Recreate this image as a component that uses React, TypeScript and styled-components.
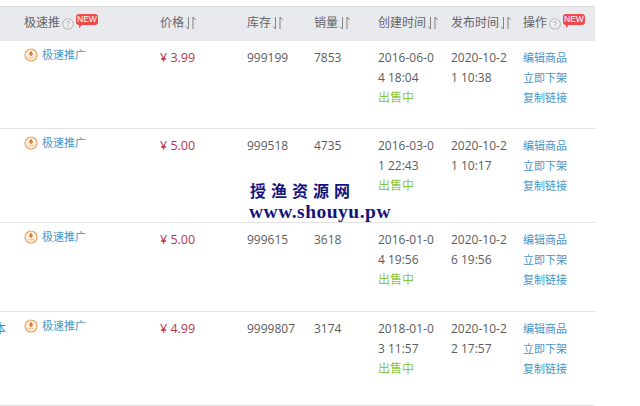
import styled, { createGlobalStyle } from 'styled-components';

const GlobalStyle = createGlobalStyle`
  html, body {
    margin: 0;
    padding: 0;
    background: #fff;
    font-family: "Open Sans", "Noto Sans CJK SC", sans-serif;
    font-size: 12px;
    color: #5c5c5c;
  }
`;

const COLUMNS = '24px 136px 87px 67px 64px 73px 72px 72px';

const Page = styled.div`
  position: relative;
  width: 640px;
  height: 406px;
  padding-top: 6px;
  box-sizing: border-box;
  overflow: hidden;
`;

const Table = styled.div`
  width: 595px;
`;

const HeaderRow = styled.div`
  display: grid;
  grid-template-columns: ${COLUMNS};
  align-items: center;
  height: 35px;
  box-sizing: border-box;
  padding-bottom: 3px;
  border-top: 1px solid #dcdcdf;
  background: #e9eaee;
  color: #666;
`;

const HeaderCell = styled.div`
  display: flex;
  align-items: center;
  white-space: nowrap;
  line-height: 30px;
`;

const Row = styled.div<{ $height: number }>`
  display: grid;
  grid-template-columns: ${COLUMNS};
  height: ${(props) => props.$height}px;
  box-sizing: border-box;
  padding-top: 7px;
  border-bottom: 1px solid #e2e2e2;
  line-height: 20px;
`;

const Cell = styled.div`
  word-break: break-all;
  padding-right: 12px;
  min-width: 0;
`;

const DateCell = styled(Cell)`
  padding-right: 14px;
`;

const Cut = styled.div`
  color: #3f8fc4;
  margin-left: -6px;
  white-space: nowrap;
`;

const Promo = styled.div`
  display: flex;
  align-items: center;
  gap: 4px;
  height: 16px;
  margin-top: -1px;
  color: #4a94c6;
  font-size: 11px;
`;

const Price = styled(Cell)`
  color: #b5364e;
  font-size: 12.5px;
`;

const Selling = styled.div`
  color: #8cc63f;
`;

const OpLink = styled.div`
  color: #4a94c6;
  font-size: 11px;
  white-space: nowrap;
`;

const NewBadge = styled.span`
  position: relative;
  display: inline-block;
  margin-left: 2px;
  margin-top: -6px;
  padding: 0 1px;
  height: 11px;
  line-height: 11px;
  border-radius: 3px;
  background: #ec4a50;
  color: #fff;
  font-family: "Liberation Sans", sans-serif;
  font-size: 8.5px;

  &::after {
    content: '';
    position: absolute;
    left: 3px;
    bottom: -3px;
    border-top: 3px solid #ec4a50;
    border-right: 3px solid transparent;
  }
`;

const Watermark = styled.div`
  position: absolute;
  left: 249px;
  top: 180px;
  color: #14147c;
  font-weight: 700;
`;

const WatermarkTitle = styled.div`
  font-family: "Noto Sans CJK SC", sans-serif;
  font-size: 16px;
  line-height: 20px;
  letter-spacing: 5px;
  padding-left: 1px;
`;

const WatermarkUrl = styled.div`
  font-family: "Liberation Serif", serif;
  font-size: 19.5px;
  line-height: 23px;
  letter-spacing: 0.5px;
  white-space: nowrap;
`;

function SortIcon() {
  return (
    <svg width="12" height="14" viewBox="0 0 12 14" fill="none" stroke="#777" strokeWidth="0.9" style={{ marginLeft: 1 }}>
      <path d="M3.5 1v12L1 10.5" />
      <path d="M8 13V1l2.8 2.8" />
    </svg>
  );
}

function HelpIcon() {
  return (
    <svg width="12" height="12" viewBox="0 0 13 13" style={{ marginLeft: 2, marginTop: 2 }}>
      <circle cx="6.5" cy="6.5" r="5.7" fill="#f1f1f3" stroke="#b9b9bd" strokeWidth="1.1" />
      <path d="M4.9 5.2c0-2.1 3.2-2.1 3.2 0 0 1.2-1.6 1.2-1.6 2.6" fill="none" stroke="#aaa" strokeWidth="1" />
      <circle cx="6.5" cy="9.6" r="0.7" fill="#aaa" />
    </svg>
  );
}

function PromoIcon() {
  return (
    <svg width="14" height="14" viewBox="0 0 14 14">
      <circle cx="7" cy="7" r="6" fill="#fdf1e2" stroke="#eda35f" strokeWidth="1.2" />
      <path d="M7 2.5 9 6 7 8.2 5 6Z" fill="#e2763a" />
      <path d="M3.6 8.2C5 10 9 10 10.4 8.2 10 11 4 11 3.6 8.2Z" fill="#f0b06f" />
    </svg>
  );
}

interface Item {
  height: number;
  lead?: string;
  price: string;
  stock: string;
  sales: string;
  created: string;
  published: string;
}

const items: Item[] = [
  { height: 88, price: '¥ 3.99', stock: '999199', sales: '7853', created: '2016-06-04 18:04', published: '2020-10-21 10:38' },
  { height: 94, price: '¥ 5.00', stock: '999518', sales: '4735', created: '2016-03-01 22:43', published: '2020-10-21 10:17' },
  { height: 89, price: '¥ 5.00', stock: '999615', sales: '3618', created: '2016-01-04 19:56', published: '2020-10-26 19:56' },
  { height: 94, lead: '本', price: '¥ 4.99', stock: '9999807', sales: '3174', created: '2018-01-03 11:57', published: '2020-10-22 17:57' },
];

export default function App() {
  return (
    <Page>
      <GlobalStyle />
      <Table>
        <HeaderRow>
          <div />
          <HeaderCell>
            极速推
            <HelpIcon />
            <NewBadge>NEW</NewBadge>
          </HeaderCell>
          <HeaderCell>价格<SortIcon /></HeaderCell>
          <HeaderCell>库存<SortIcon /></HeaderCell>
          <HeaderCell>销量<SortIcon /></HeaderCell>
          <HeaderCell>创建时间<SortIcon /></HeaderCell>
          <HeaderCell>发布时间<SortIcon /></HeaderCell>
          <HeaderCell>
            操作
            <HelpIcon />
            <NewBadge>NEW</NewBadge>
          </HeaderCell>
        </HeaderRow>
        {items.map((item) => (
          <Row $height={item.height} key={item.stock}>
            <Cut>{item.lead}</Cut>
            <Promo>
              <PromoIcon />
              极速推广
            </Promo>
            <Price>{item.price}</Price>
            <Cell>{item.stock}</Cell>
            <Cell>{item.sales}</Cell>
            <DateCell>
              {item.created}
              <Selling>出售中</Selling>
            </DateCell>
            <DateCell>{item.published}</DateCell>
            <div>
              <OpLink>编辑商品</OpLink>
              <OpLink>立即下架</OpLink>
              <OpLink>复制链接</OpLink>
            </div>
          </Row>
        ))}
      </Table>
      <Watermark>
        <WatermarkTitle>授渔资源网</WatermarkTitle>
        <WatermarkUrl>www.shouyu.pw</WatermarkUrl>
      </Watermark>
    </Page>
  );
}
